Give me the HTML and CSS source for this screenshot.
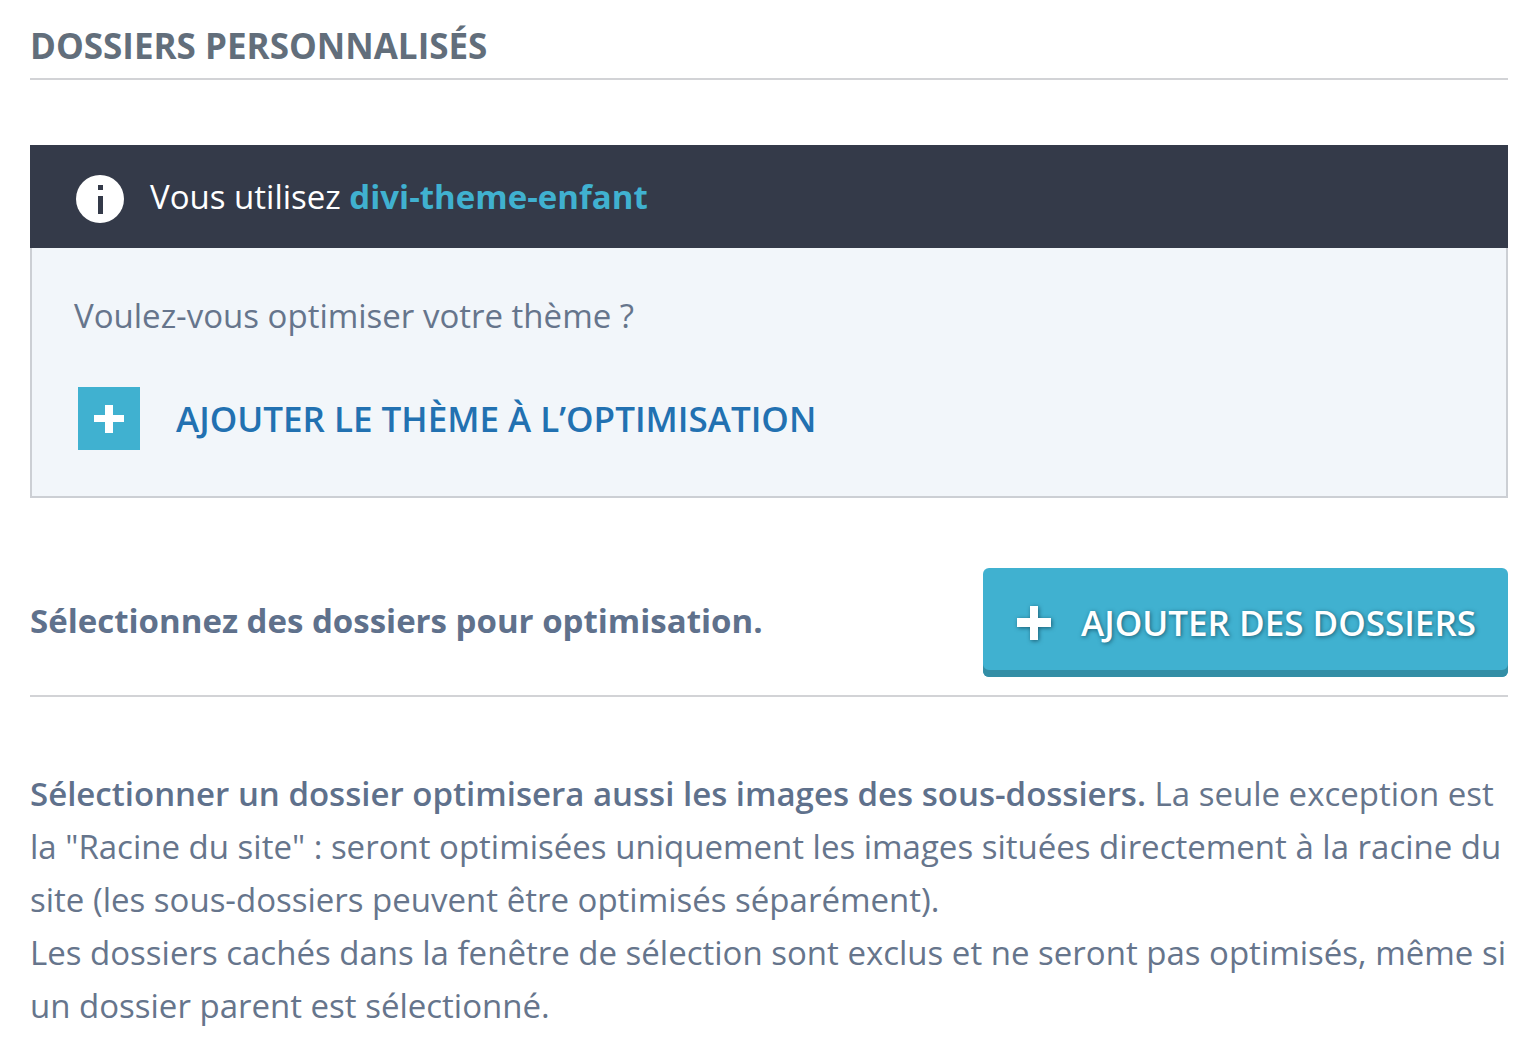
FILE: index.html
```html
<!DOCTYPE html>
<html lang="fr">
<head>
  <meta charset="UTF-8" />
  <meta name="viewport" content="width=device-width, initial-scale=1" />
  <title>Dossiers personnalisés</title>
  <link rel="stylesheet" href="styles.css">
</head>
<body>
  <main class="settings">
    <h2 class="section-title">Dossiers personnalisés</h2>

    <section class="theme-box">
      <header class="theme-header">
        <svg class="info-icon" viewBox="0 0 48 48" aria-hidden="true">
          <circle cx="24" cy="24" r="24" fill="#fff"/>
          <path d="M22 10h5v5h-5zM22 21h5v18h-5z" fill="#343a49"/>
        </svg>
        <p>Vous utilisez <strong>divi-theme-enfant</strong></p>
      </header>
      <div class="theme-body">
        <p>Voulez-vous optimiser votre thème ?</p>
        <button type="button" class="add-theme">
          <span class="plus-box">
            <svg class="plus-icon" viewBox="0 0 30 30" aria-hidden="true"><path d="M11 1h8v10h11v7H19v11h-8V18H0v-7h11z" fill="#fff"/></svg>
          </span>
          Ajouter le thème à l’optimisation
        </button>
      </div>
    </section>

    <div class="folders-bar">
      <p class="folders-label">Sélectionnez des dossiers pour optimisation.</p>
      <button type="button" class="add-folders">
        <svg class="plus-icon" viewBox="0 0 34 34" aria-hidden="true"><path d="M13 0h8v12h13v9H21v13h-8V21H0v-9h13z" fill="#fff"/></svg>
        Ajouter des dossiers
      </button>
    </div>

    <p class="folders-help">
      <strong>Sélectionner un dossier optimisera aussi les images des sous-dossiers.</strong>
      La seule exception est la "Racine du site" : seront optimisées uniquement les images situées directement à la racine du site (les sous-dossiers peuvent être optimisés séparément).<br>
      Les dossiers cachés dans la fenêtre de sélection sont exclus et ne seront pas optimisés, même si un dossier parent est sélectionné.
    </p>
  </main>
</body>
</html>
```
FILE: styles.css
```css
* {
  box-sizing: border-box;
}

body {
  margin: 0;
  background: #fff;
  color: #66758c;
  font-family: "Open Sans", "Noto Sans", sans-serif;
  font-size: 33px;
  line-height: 52px;
}

h2, p {
  margin: 0;
}

button {
  border: none;
  font: inherit;
  cursor: pointer;
}

.settings {
  padding: 20px 32px 20px 30px;
}

.section-title {
  padding-bottom: 6px;
  border-bottom: 2px solid #d2d3d6;
  color: #626e7b;
  font-size: 35px;
  font-weight: 700;
  text-transform: uppercase;
}

.theme-box {
  margin-top: 65px;
  border: 2px solid #cccfd4;
  border-top: none;
  background: #f2f6fa;
}

.theme-header {
  display: flex;
  align-items: flex-end;
  gap: 26px;
  margin: 0 -2px;
  padding: 26px 46px 25px;
  background: #343a49;
  color: #fff;
}

.theme-header strong {
  color: #40b1d0;
  font-weight: 700;
}

.info-icon {
  width: 48px;
  height: 48px;
}

.theme-body {
  padding: 42px 42px 46px;
}

.add-theme {
  display: flex;
  align-items: center;
  gap: 36px;
  margin-top: 45px;
  padding: 0 4px;
  background: none;
  color: #2271b1;
  font-size: 35px;
  font-weight: 600;
  text-transform: uppercase;
}

.plus-box {
  display: flex;
  align-items: center;
  justify-content: center;
  width: 62px;
  height: 63px;
  background: #40b1d0;
}

.plus-icon {
  width: 30px;
  height: 30px;
}

.folders-bar {
  display: flex;
  align-items: center;
  justify-content: space-between;
  margin-top: 70px;
  padding-bottom: 18px;
  border-bottom: 2px solid #d2d3d6;
}

.folders-label {
  padding-bottom: 4px;
  color: #5f718c;
  font-weight: 700;
}

.add-folders {
  display: flex;
  align-items: center;
  gap: 30px;
  padding: 29px 32px 28px 34px;
  border-radius: 6px;
  background: #40b1d0;
  box-shadow: inset 0 -7px #338ea6;
  color: #fff;
  font-size: 35px;
  font-weight: 600;
  text-transform: uppercase;
  text-shadow: 1px 1px 4px #1b5f75;
}

.add-folders .plus-icon {
  width: 34px;
  height: 34px;
  overflow: visible;
  filter: drop-shadow(1px 1px 2px #1b5f75);
}

.folders-help {
  margin-top: 70px;
  line-height: 53px;
}

.folders-help strong {
  color: #5f718c;
  font-weight: 600;
}
```
